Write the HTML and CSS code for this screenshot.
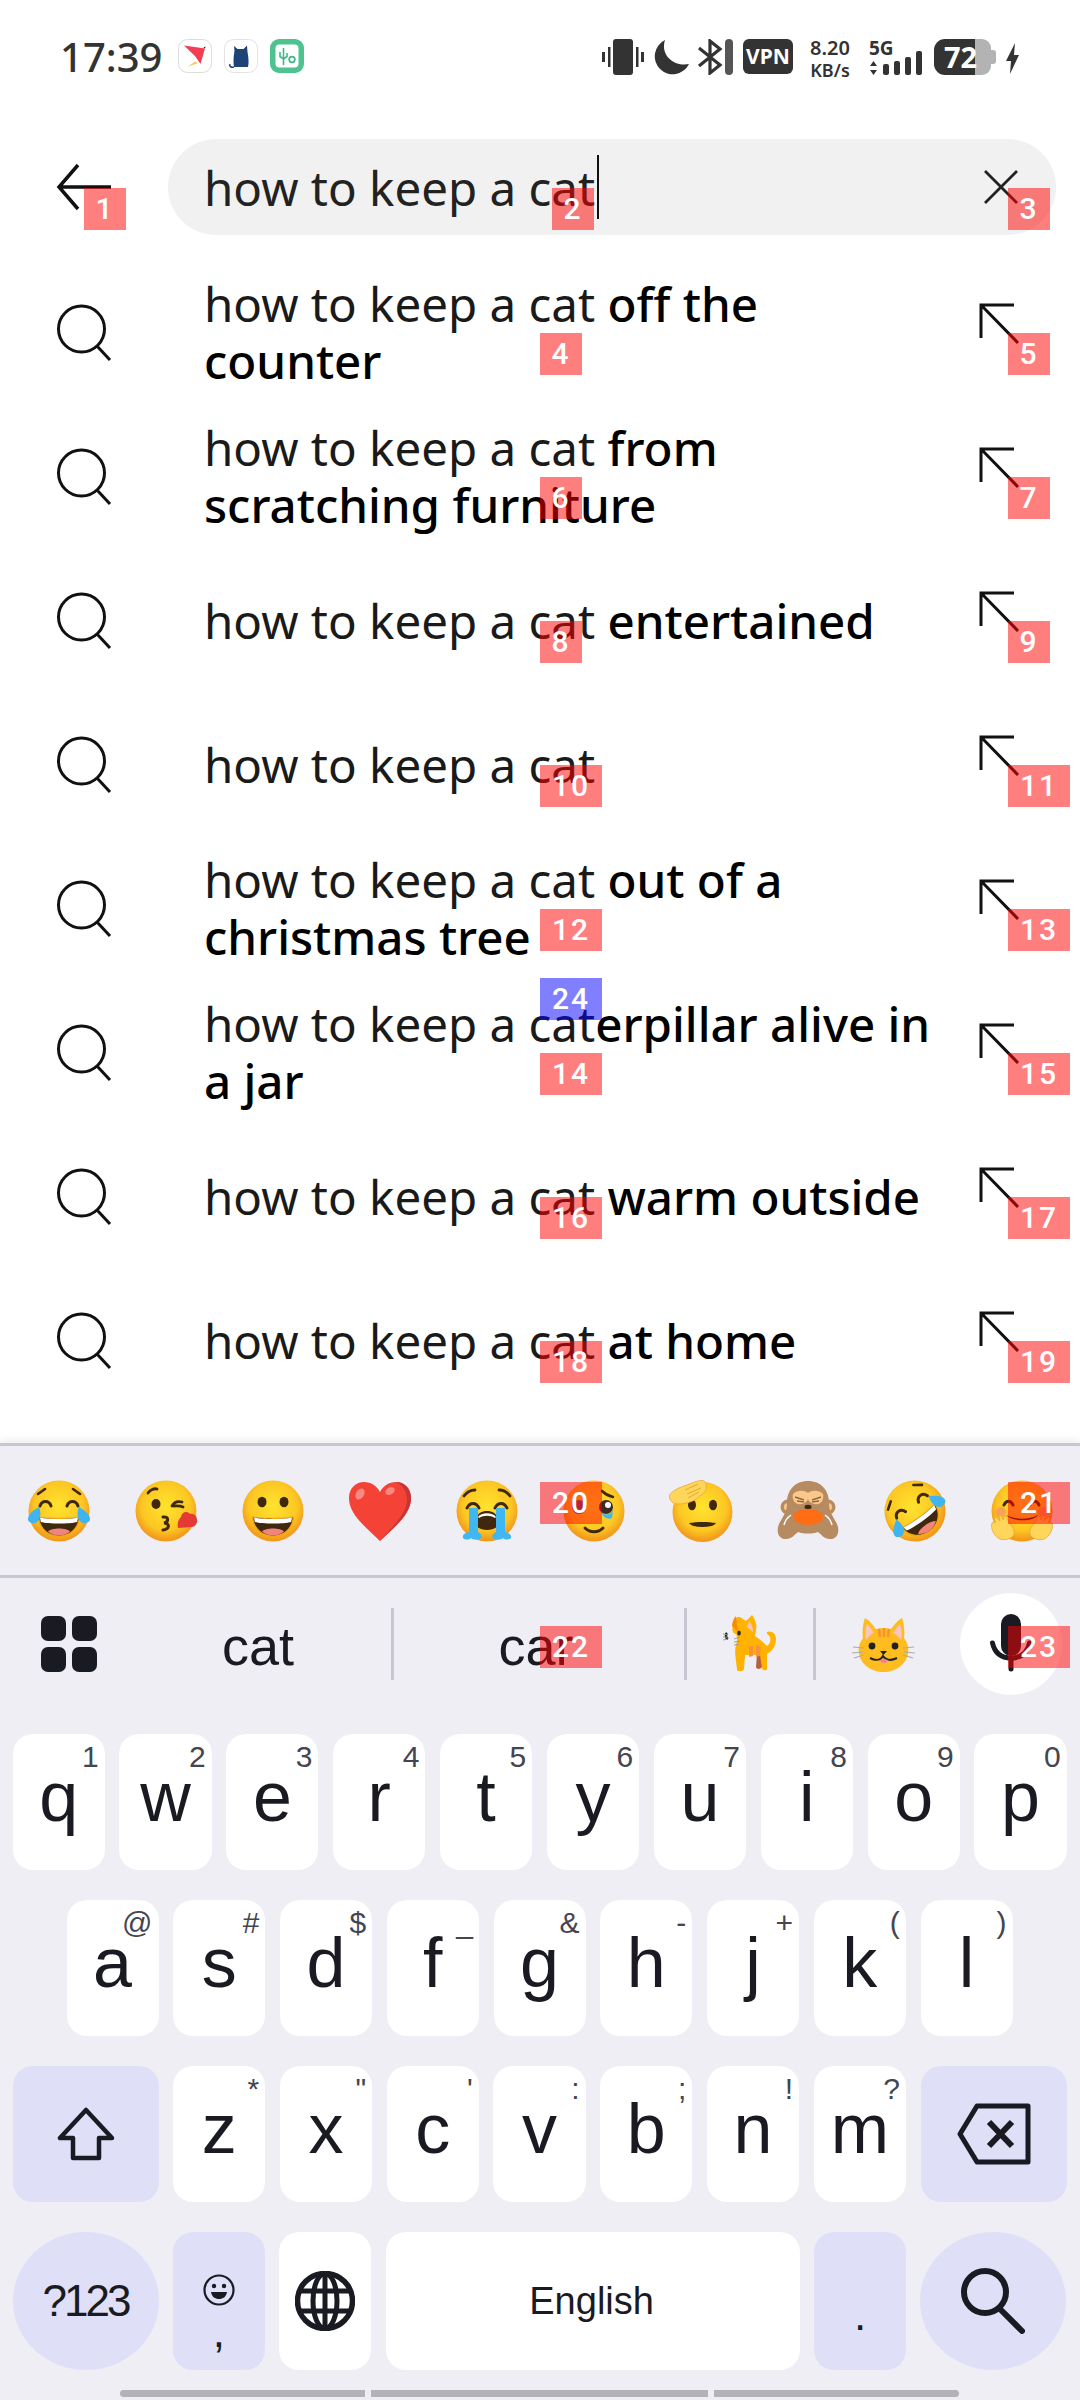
FILE: index.html
```html
<!DOCTYPE html>
<html lang="en">
<head>
<meta charset="utf-8">
<title>Search</title>
<link rel="stylesheet" href="styles.css">
</head>
<body>
<svg class="defs" aria-hidden="true">
  <defs>
    <radialGradient id="face" cx="50%" cy="42%" r="55%">
      <stop offset="0" stop-color="#ffe32e"/><stop offset=".72" stop-color="#fcc723"/><stop offset="1" stop-color="#f29a1c"/>
    </radialGradient>
    <symbol id="ball" viewBox="0 0 64 64"><circle cx="32" cy="32" r="30.5" fill="url(#face)"/></symbol>
    <symbol id="grin" viewBox="0 0 64 64">
      <path d="M11 37c7 2.500 35 2.500 42 0 1 10-8 21-21 21S10 47 11 37z" fill="#f5a50f"/>
      <path d="M12.500 38.500c8 2 31 2 39 0 0 9-8 18-19.500 18S12.500 47.500 12.500 38.500z" fill="#40280f"/>
      <path d="M13 38.500c8 2 30 2 38 0l-.8 4.500c-8 2-28.400 2-36.400 0z" fill="#fff"/>
      <path d="M21 52.500c3-4 19-4 22 0-3 2.500-7 4-11 4s-8-1.500-11-4z" fill="#f2857b"/>
    </symbol>
    <symbol id="joy" viewBox="0 0 64 64">
      <use href="#ball" width="64" height="64"/>
      <use href="#grin" width="64" height="64"/>
      <path d="M13 27c2-6 9-6 11 0M40 27c2-6 9-6 11 0" fill="none" stroke="#40280f" stroke-width="3" stroke-linecap="round"/>
      <path d="M11 15l7-5M53 15l-7-5" fill="none" stroke="#40280f" stroke-width="2.600" stroke-linecap="round"/>
      <path d="M12 28c-5 3-11 7-11 12 0 4 7 6 10 2 3-4 3-9 1-14zM52 28c5 3 11 7 11 12 0 4-7 6-10 2-3-4-3-9-1-14z" fill="#3fb4ef"/>
    </symbol>
  </defs>
</svg>

<div class="screen">
  <div class="status">
    <span class="time">17:39</span>
    <svg class="app" viewBox="0 0 34 34"><rect x=".5" y=".5" width="33" height="33" rx="9" fill="#fff" stroke="#dcdcdc"/><path d="M6 6.500L27 9.500 22.500 25 17 17z" fill="#f43c54"/><path d="M9.500 28L17 22.500 20 24z" fill="#fcc65a"/><path d="M25.500 8.500L27.500 7.500 27 9.500z" fill="#111"/></svg>
    <svg class="app" viewBox="0 0 34 34"><rect x=".5" y=".5" width="33" height="33" rx="9" fill="#fff" stroke="#e2e2e2"/><path d="M10 28c-1-7 0-13 .5-16L10 7l3.500 3h6L23 6.500 23.500 13c1 5 1.500 11 .5 15z" fill="#1d4377"/><path d="M10 28c-3 1-5-1-4-3" fill="none" stroke="#1d4377" stroke-width="1.500"/></svg>
    <svg class="app" viewBox="0 0 34 34"><rect width="34" height="34" rx="9" fill="#4ec38f"/><rect x="5.500" y="5.500" width="23" height="23" rx="4" fill="#fff"/><path d="M13.500 9v17M10 13v4.500l3.500 2.500 3.500-2.500V14" fill="none" stroke="#3fb98a" stroke-width="1.600"/><circle cx="22" cy="20.500" r="2.800" fill="none" stroke="#3fb98a" stroke-width="1.800"/></svg>

    <div class="status-right">
      <svg class="status-glyphs" viewBox="0 0 131 36">
        <rect x="11" width="20" height="36" rx="3" fill="#333"/>
        <rect y="13" width="3" height="10" fill="#333"/><rect x="6" y="8" width="2.500" height="20" fill="#333"/>
        <rect x="34" y="8" width="2.500" height="20" fill="#333"/><rect x="39" y="13" width="3" height="10" fill="#333"/>
        <path d="M63 1a18 18 0 1 0 24 24C72 28 58 16 63 1z" fill="#333"/>
        <path d="M97 9l21 17-10 8V2l10 8-21 17" fill="none" stroke="#333" stroke-width="3.200"/>
        <rect x="123" width="8" height="36" rx="4" fill="#555"/>
      </svg>
      <span class="vpn">VPN</span>
      <div class="speed"><span>8.20</span><span class="unit">KB/s</span></div>
      <div class="signal">
        <span class="fiveg">5G</span>
        <svg class="bars" viewBox="0 0 53 14"><path d="M4.500 0L8 5H1zM4.500 14L1 9h7z" fill="#333"/><rect x="14" y="3" width="6" height="11" rx="2" fill="#333"/><rect x="25" y="0" width="6" height="14" rx="2" fill="#333"/><rect x="36" y="-4" width="6" height="18" rx="2" fill="#333"/><rect x="47" y="-10" width="6" height="24" rx="2" fill="#333"/></svg>
      </div>
      <div class="battery">
        <svg class="battery-shape" viewBox="0 0 62 36"><path d="M57 11h2a3 3 0 0 1 3 3v8a3 3 0 0 1-3 3h-2z" fill="#b3b3b3"/><rect x="30" width="27" height="36" rx="9" fill="#b3b3b3"/><path d="M41 0H11A11 11 0 0 0 0 11v14a11 11 0 0 0 11 11h30z" fill="#333"/></svg>
        <span class="battery-level">72</span>
      </div>
      <svg class="bolt" viewBox="0 0 13 31"><path d="M9 0L0 18h5L4 31l9-19H8z" fill="#333"/></svg>
    </div>
  </div>

  <div class="header">
    <svg class="back" viewBox="0 0 56 48"><path d="M55 24H4M22 2L3 24l19 22" fill="none" stroke="#111" stroke-width="3.500"/></svg>
    <div class="search">
      <span class="query">how to keep a cat</span><span class="caret"></span>
      <svg class="clear" viewBox="0 0 36 36"><path d="M2 2l32 32M34 2L2 34" stroke="#222" stroke-width="2.800" fill="none"/></svg>
    </div>
    <span class="badge at-1">1</span><span class="badge at-2">2</span><span class="badge at-3">3</span>
  </div>

  <ul class="list">
    <li class="row">
      <svg class="ic-search" viewBox="0 0 64 64"><circle cx="25.500" cy="32" r="23" fill="none" stroke="#111" stroke-width="3"/><path d="M41 49l13 14" stroke="#111" stroke-width="3"/></svg>
      <p class="sug">how to keep a cat <b>off the<br>counter</b></p>
      <svg class="ic-fill" viewBox="0 0 44 44"><path d="M4 36V3h33M4 3l37 38" fill="none" stroke="#111" stroke-width="3"/></svg>
      <span class="badge mid">4</span><span class="badge end">5</span>
    </li>
    <li class="row">
      <svg class="ic-search" viewBox="0 0 64 64"><circle cx="25.500" cy="32" r="23" fill="none" stroke="#111" stroke-width="3"/><path d="M41 49l13 14" stroke="#111" stroke-width="3"/></svg>
      <p class="sug">how to keep a cat <b>from<br>scratching furniture</b></p>
      <svg class="ic-fill" viewBox="0 0 44 44"><path d="M4 36V3h33M4 3l37 38" fill="none" stroke="#111" stroke-width="3"/></svg>
      <span class="badge mid">6</span><span class="badge end">7</span>
    </li>
    <li class="row">
      <svg class="ic-search" viewBox="0 0 64 64"><circle cx="25.500" cy="32" r="23" fill="none" stroke="#111" stroke-width="3"/><path d="M41 49l13 14" stroke="#111" stroke-width="3"/></svg>
      <p class="sug">how to keep a cat <b>entertained</b></p>
      <svg class="ic-fill" viewBox="0 0 44 44"><path d="M4 36V3h33M4 3l37 38" fill="none" stroke="#111" stroke-width="3"/></svg>
      <span class="badge mid">8</span><span class="badge end">9</span>
    </li>
    <li class="row">
      <svg class="ic-search" viewBox="0 0 64 64"><circle cx="25.500" cy="32" r="23" fill="none" stroke="#111" stroke-width="3"/><path d="M41 49l13 14" stroke="#111" stroke-width="3"/></svg>
      <p class="sug">how to keep a cat</p>
      <svg class="ic-fill" viewBox="0 0 44 44"><path d="M4 36V3h33M4 3l37 38" fill="none" stroke="#111" stroke-width="3"/></svg>
      <span class="badge mid wide">10</span><span class="badge end wide">11</span>
    </li>
    <li class="row">
      <svg class="ic-search" viewBox="0 0 64 64"><circle cx="25.500" cy="32" r="23" fill="none" stroke="#111" stroke-width="3"/><path d="M41 49l13 14" stroke="#111" stroke-width="3"/></svg>
      <p class="sug">how to keep a cat <b>out of a<br>christmas tree</b></p>
      <svg class="ic-fill" viewBox="0 0 44 44"><path d="M4 36V3h33M4 3l37 38" fill="none" stroke="#111" stroke-width="3"/></svg>
      <span class="badge mid wide">12</span><span class="badge end wide">13</span>
    </li>
    <li class="row">
      <svg class="ic-search" viewBox="0 0 64 64"><circle cx="25.500" cy="32" r="23" fill="none" stroke="#111" stroke-width="3"/><path d="M41 49l13 14" stroke="#111" stroke-width="3"/></svg>
      <p class="sug">how to keep a cat<b>erpillar alive in<br>a jar</b></p>
      <svg class="ic-fill" viewBox="0 0 44 44"><path d="M4 36V3h33M4 3l37 38" fill="none" stroke="#111" stroke-width="3"/></svg>
      <span class="badge mid wide blue">24</span><span class="badge mid wide">14</span><span class="badge end wide">15</span>
    </li>
    <li class="row">
      <svg class="ic-search" viewBox="0 0 64 64"><circle cx="25.500" cy="32" r="23" fill="none" stroke="#111" stroke-width="3"/><path d="M41 49l13 14" stroke="#111" stroke-width="3"/></svg>
      <p class="sug">how to keep a cat <b>warm outside</b></p>
      <svg class="ic-fill" viewBox="0 0 44 44"><path d="M4 36V3h33M4 3l37 38" fill="none" stroke="#111" stroke-width="3"/></svg>
      <span class="badge mid wide">16</span><span class="badge end wide">17</span>
    </li>
    <li class="row">
      <svg class="ic-search" viewBox="0 0 64 64"><circle cx="25.500" cy="32" r="23" fill="none" stroke="#111" stroke-width="3"/><path d="M41 49l13 14" stroke="#111" stroke-width="3"/></svg>
      <p class="sug">how to keep a cat <b>at home</b></p>
      <svg class="ic-fill" viewBox="0 0 44 44"><path d="M4 36V3h33M4 3l37 38" fill="none" stroke="#111" stroke-width="3"/></svg>
      <span class="badge mid wide">18</span><span class="badge end wide">19</span>
    </li>
  </ul>

  <div class="keyboard">
    <div class="emoji-row">
      <svg class="emoji" viewBox="0 0 64 64"><use href="#joy" width="64" height="64"/></svg>
      <svg class="emoji" viewBox="0 0 64 64"><use href="#ball" width="64" height="64"/><ellipse cx="22" cy="25" rx="4.500" ry="5" fill="#40280f"/><path d="M14 14c2-3 6-5 9-4M38 27c2-4 6-5 10-4M40 27c3 0 6-.5 9 1" fill="none" stroke="#40280f" stroke-width="2.800" stroke-linecap="round"/><path d="M29 38c6-1 6 5 1 6 6 0 6 6-1 7" fill="none" stroke="#40280f" stroke-width="3" stroke-linecap="round"/><path d="M47 38c1-6 7-6 9-3 4-1 8 3 7 8-1 3-2 5-6 5l-13 1c-1-4 0-8 3-11z" fill="#e53935"/></svg>
      <svg class="emoji" viewBox="0 0 64 64"><use href="#ball" width="64" height="64"/><use href="#grin" width="64" height="64"/><ellipse cx="21" cy="23" rx="4.500" ry="5.200" fill="#40280f"/><ellipse cx="43" cy="23" rx="4.500" ry="5.200" fill="#40280f"/></svg>
      <svg class="emoji" viewBox="0 0 64 64"><path d="M32 62C18 48 1 36 1 19 1 9 8 3 16 3c7 0 13 4 16 10C35 7 41 3 48 3c8 0 15 6 15 16 0 17-17 29-31 43z" fill="#f44336"/><path d="M48 3c8 0 15 6 15 16 0 17-17 29-31 43 11-13 27-27 27-42 0-8-5-14-11-17z" fill="#c93535"/><ellipse cx="12" cy="15" rx="4" ry="6" transform="rotate(30 12 15)" fill="#f98a80"/><ellipse cx="42" cy="12" rx="5" ry="3.500" transform="rotate(-30 42 12)" fill="#f98a80"/></svg>
      <svg class="emoji" viewBox="0 0 64 64"><use href="#ball" width="64" height="64"/><path d="M9 17c3-4 7-6 11-6M55 17c-3-4-7-6-11-6M12 29c3-6 9-6 12 0M40 29c3-6 9-6 12 0" fill="none" stroke="#40280f" stroke-width="2.800" stroke-linecap="round"/><path d="M22 48V40c0-6 5-8 10-8s10 2 10 8v8c-6 4-14 4-20 0z" fill="#40280f"/><path d="M23 38c3-5 15-5 18 0l-1 1c-5-3-11-3-16 0z" fill="#fff"/><path d="M14 29h9v24c3 2 5 4 3 6-2 2-8 2-10 0-2 2-6 2-8 0-1-3 2-5 6-6zM41 29h9v24c4 1 7 3 6 6-2 2-6 2-8 0-2 2-8 2-10 0-2-2 0-4 3-6z" fill="#3fb7f2"/></svg>
      <svg class="emoji" viewBox="0 0 64 64"><use href="#ball" width="64" height="64"/><ellipse cx="17" cy="28" rx="7" ry="7" fill="#6d4a6e"/><ellipse cx="44" cy="28" rx="7" ry="7" fill="#3f2a2a"/><circle cx="46" cy="26" r="3" fill="#fff"/><path d="M38 31c3 6 10 6 13 0l-1 8c-4 2-9 0-12-8z" fill="#3fb7f2"/><path d="M23 49c5 5 13 5 18 0" fill="none" stroke="#40280f" stroke-width="3" stroke-linecap="round"/><path d="M40 12c3 3 7 5 11 6" fill="none" stroke="#40280f" stroke-width="2.600" stroke-linecap="round"/></svg>
      <svg class="emoji" viewBox="0 0 64 64"><circle cx="33.500" cy="33" r="30" fill="url(#face)"/><ellipse cx="23" cy="26" rx="4" ry="5.200" fill="#40280f"/><ellipse cx="44" cy="26" rx="4" ry="5.200" fill="#40280f"/><path d="M20 44c8-1.500 19-1.500 27 0-2 3-7 4-13 4s-12-1-14-4z" fill="#40280f"/><path d="M0 17c3-6 12-9 18-11 5-2 14-6 17-4 2 1 3 4 2 6 1 3-3 7-6 9-6 6-15 8-22 8-5 0-8-3-9-8z" fill="#ffd65c" stroke="#eda52b" stroke-width=".8"/><path d="M16 11l13-6M18 15l14-6M19 19l11-6" fill="none" stroke="#eda52b" stroke-width="1"/></svg>
      <svg class="emoji" viewBox="0 0 64 64"><circle cx="12" cy="28" r="7.500" fill="#b78b62"/><circle cx="52" cy="28" r="7.500" fill="#b78b62"/><circle cx="12" cy="28" r="4" fill="#fcc889"/><circle cx="52" cy="28" r="4" fill="#fcc889"/><path d="M32 2C19 2 11 11 11 24c0 8-3 12-8 21-3 7-1 15 7 15 6 0 8-4 12-7 6 2 14 2 20 0 4 3 6 7 12 7 8 0 10-8 7-15-5-9-8-13-8-21C53 11 45 2 32 2z" fill="#b78b62"/><path d="M32 14c-4-3-11-3-15 1-1 5 1 9 5 10 5 1 9-2 10-5 1 3 5 6 10 5 4-1 6-5 5-10-4-4-11-4-15-1z" fill="#fcc889"/><path d="M19 18l9 3M21 22l7 1M45 18l-9 3M43 22l-7 1" stroke="#8d6a48" stroke-width="1.500"/><ellipse cx="32" cy="28" rx="3.500" ry="2.200" fill="#40280f"/><ellipse cx="32" cy="38" rx="15" ry="8" fill="#ff6d14"/><path d="M15 36c-3 2-6 6-7 10M49 36c3 2 6 6 7 10" fill="none" stroke="#fff" stroke-width="1.500"/></svg>
      <svg class="emoji" viewBox="0 0 64 64"><g transform="rotate(-36 32 32)"><use href="#joy" width="64" height="64"/></g></svg>
      <svg class="emoji" viewBox="0 0 64 64"><use href="#ball" width="64" height="64"/><path d="M14 26c2-5 7-5 9 0M40 26c2-5 7-5 9 0" fill="none" stroke="#40280f" stroke-width="3" stroke-linecap="round"/><path d="M16 36c10 5 22 5 32 0-4 7-26 7-32 0z" fill="#40280f"/><circle cx="11" cy="33" r="5" fill="#f5867a" opacity=".6"/><circle cx="53" cy="33" r="5" fill="#f5867a" opacity=".6"/><path d="M2 44c-2 6 3 14 8 16 6 2 13-1 14-5 1-6-3-8-5-12-2-3-2-6-4-6-2 0-1 4-2 4-1-4-3-6-4-4l1 5-4-4c-2 0-2 3 0 5z" fill="#ffd65c" stroke="#eda52b" stroke-width=".8"/><path d="M62 44c2 6-3 14-8 16-6 2-13-1-14-5-1-6 3-8 5-12 2-3 2-6 4-6 2 0 1 4 2 4 1-4 3-6 4-4l-1 5 4-4c2 0 2 3 0 5z" fill="#ffd65c" stroke="#eda52b" stroke-width=".8"/></svg>
      <span class="badge emoji-badge mid wide">20</span><span class="badge emoji-badge end wide">21</span>
    </div>

    <div class="suggest-row">
      <div class="apps"><span></span><span></span><span></span><span></span></div>
      <span class="word cell-a">cat</span>
      <i class="divider"></i>
      <span class="word cell-b">car</span>
      <i class="divider"></i>
      <div class="cell-c">
        <svg class="cat-walk" viewBox="0 0 54 60"><path d="M14 54l2-14h6l-3 14c-2 3-5 2-5 0zM33 52l1-13h6l-1 13c-2 3-6 2-6 0z" fill="#b85f3f"/><path d="M14 2l3 0 6 4 6-6c4 5 5 11 4 15l-1 6c5 3 9 7 12 10 3-2 4-5 3-9-1-2-4-3-3-5 4-2 9 1 9 7 0 8-5 13-9 15v14c1 3-5 3-5 0l-2-13H22l-1 14c-1 3-7 3-7 0-1-9-3-18-1-24 1-4 2-7 0-11C8 18 8 12 14 2z" fill="#ffb300"/><path d="M13 1l2 16-6-6c0-4 2-8 4-10z" fill="#fb8c00"/><path d="M26 6c3 3 4 7 4 11l-6-5z" fill="#fbc5b8"/><path d="M33 30l5 2-1 9-4 1zM26 31l4 0 0 10-4 1z" fill="#f9913a"/><ellipse cx="16" cy="18" rx="1.800" ry="2.500" fill="#2a2a2a"/><path d="M4 18c-2 2-1 5 1 6" stroke="#222" stroke-width="2.500" fill="none"/><path d="M0 19l5 1M0 22l5 0M0 25l5-1M11 24l6-2M11 27l6-1M11 30l5-1" stroke="#999" stroke-width=".9"/></svg>
      </div>
      <i class="divider"></i>
      <div class="cell-d">
        <svg class="cat-face" viewBox="0 0 63 56"><path d="M13 1c4 2 8 7 11 11 5-1.500 10-1.500 15 0 3-4 7-9 11-11 2 5 3 14 2 20 4 5 5 11 4 15-1 11-12 19-24.500 19S8 47 7 36c-1-4 0-10 4-15-1-6 0-15 2-20z" fill="#ffbc1f"/><path d="M15 7c3 3 5 6 7 9-3 1-6 4-8 7-1-5-1-11 1-16zM48 7c-3 3-5 6-7 9 3 1 6 4 8 7 1-5 1-11-1-16z" fill="#fbc5c2"/><path d="M27 12l1 8M32 11v9M37 12l-1 8" stroke="#f59331" stroke-width="2.500"/><circle cx="20" cy="29" r="3.400" fill="#222"/><circle cx="43" cy="29" r="3.400" fill="#222"/><path d="M28 34h7l-3.500 4z" fill="#222"/><path d="M18 41c6 3 11 2 13-2 3 4 8 5 14 2" fill="none" stroke="#222" stroke-width="2"/><path d="M28 43c1 4 7 4 8 0-3-1-5-1-8 0z" fill="#ef7f9a"/><path d="M1 30l11 1M0 36l11-1M2 41l10-3M62 30l-11 1M63 36l-11-1M61 41l-10-3" stroke="#aaa" stroke-width="1.200"/></svg>
      </div>
      <div class="mic">
        <svg class="mic-icon" viewBox="0 0 42 58"><rect x="11" width="20" height="42" rx="10" fill="#1a1b22"/><path d="M2.500 29C5 40 12 44 21 44s16-4 18.500-15" fill="none" stroke="#1a1b22" stroke-width="5" stroke-linecap="round"/><path d="M21 44v11" stroke="#1a1b22" stroke-width="5" stroke-linecap="round"/></svg>
      </div>
      <span class="badge suggest-badge mid wide">22</span><span class="badge suggest-badge end wide">23</span>
    </div>

    <div class="keys">
      <div class="key-row">
        <div class="key">q<sup class="hint">1</sup></div><div class="key">w<sup class="hint">2</sup></div><div class="key">e<sup class="hint">3</sup></div><div class="key">r<sup class="hint">4</sup></div><div class="key">t<sup class="hint">5</sup></div><div class="key">y<sup class="hint">6</sup></div><div class="key">u<sup class="hint">7</sup></div><div class="key">i<sup class="hint">8</sup></div><div class="key">o<sup class="hint">9</sup></div><div class="key">p<sup class="hint">0</sup></div>
      </div>
      <div class="key-row inset">
        <div class="key">a<sup class="hint">@</sup></div><div class="key">s<sup class="hint">#</sup></div><div class="key">d<sup class="hint">$</sup></div><div class="key">f<sup class="hint">_</sup></div><div class="key">g<sup class="hint">&amp;</sup></div><div class="key">h<sup class="hint">-</sup></div><div class="key">j<sup class="hint">+</sup></div><div class="key">k<sup class="hint">(</sup></div><div class="key">l<sup class="hint">)</sup></div>
      </div>
      <div class="key-row">
        <div class="key wide-key tint icon-key"><svg class="k-shift" viewBox="0 0 58 54"><path d="M29 3L3 31h13v20h26V31h13z" fill="none" stroke="#1a1b22" stroke-width="4.500" stroke-linejoin="round"/></svg></div>
        <div class="key">z<sup class="hint">*</sup></div><div class="key">x<sup class="hint">"</sup></div><div class="key">c<sup class="hint">'</sup></div><div class="key">v<sup class="hint">:</sup></div><div class="key">b<sup class="hint">;</sup></div><div class="key">n<sup class="hint">!</sup></div><div class="key">m<sup class="hint">?</sup></div>
        <div class="key wide-key tint icon-key"><svg class="k-back" viewBox="0 0 74 62"><path d="M20 3h51v56H20L3 31z" fill="none" stroke="#1a1b22" stroke-width="5" stroke-linejoin="round"/><path d="M32 19l23 24M55 19L32 43" stroke="#1a1b22" stroke-width="6"/></svg></div>
      </div>
      <div class="key-row tall">
        <div class="key wide-key tint round small-text">?123</div>
        <div class="key tint stack">
          <svg class="k-smile" viewBox="0 0 32 32"><circle cx="16" cy="16" r="14.500" fill="none" stroke="#1a1b22" stroke-width="2.200"/><circle cx="11" cy="12" r="2.200" fill="#1a1b22"/><circle cx="21" cy="12" r="2.200" fill="#1a1b22"/><path d="M8 18h16c-1 5-4 7-8 7s-7-2-8-7z" fill="#1a1b22"/></svg>
          <span class="punct">,</span>
        </div>
        <div class="key icon-key"><svg class="k-globe" viewBox="0 0 60 60"><circle cx="30" cy="30" r="27.500" fill="none" stroke="#1a1b22" stroke-width="5.500"/><ellipse cx="30" cy="30" rx="12" ry="27.500" fill="none" stroke="#1a1b22" stroke-width="5"/><path d="M30 3v54M4 20h52M4 40h52" stroke="#1a1b22" stroke-width="5"/></svg></div>
        <div class="key space">English</div>
        <div class="key tint dot"><span class="punct">.</span></div>
        <div class="key wide-key tint round icon-key"><svg class="k-search" viewBox="0 0 64 66"><circle cx="24" cy="24" r="21" fill="none" stroke="#1a1b22" stroke-width="6"/><path d="M39 41l22 22" stroke="#1a1b22" stroke-width="6" stroke-linecap="round"/></svg></div>
      </div>
    </div>

    <div class="gesture"><span></span><span></span><span></span></div>
  </div>
</div>
</body>
</html>
```

FILE: styles.css
```css
* { box-sizing: border-box; }
html, body { margin: 0; padding: 0; background: #fff; }
.defs { position: absolute; width: 0; height: 0; }

.screen {
  width: 1080px;
  height: 2400px;
  overflow: hidden;
  display: flex;
  flex-direction: column;
  font-family: "Noto Sans", sans-serif;
  color: #111;
}

/* status bar */
.status {
  display: flex;
  align-items: flex-start;
  height: 139px;
  padding: 39px 61px 0 60px;
  color: #333;
}
.time { font-size: 40px; line-height: 36px; font-weight: 500; width: 118px; }
.app { width: 34px; height: 34px; margin-right: 12px; }
.status-right { display: flex; align-items: flex-start; margin-left: auto; }
.status-glyphs { width: 131px; height: 36px; margin-right: 10px; }
.vpn {
  width: 50px; height: 35px;
  background: #333; color: #fff;
  border-radius: 6px;
  font-size: 21px; font-weight: 700; line-height: 35px; text-align: center;
  margin-right: 14px;
}
.speed {
  width: 46px; margin-right: 16px;
  display: flex; flex-direction: column; align-items: center;
  font-size: 20px; font-weight: 600; line-height: 18px;
}
.speed .unit { font-size: 18px; margin-top: 4px; }
.signal { width: 53px; margin-right: 12px; display: flex; flex-direction: column; }
.fiveg { font-size: 19px; font-weight: 700; line-height: 18px; }
.bars { width: 53px; height: 14px; margin-top: 4px; overflow: visible; }
.battery { position: relative; width: 62px; height: 36px; margin-right: 10px; }
.battery-shape { width: 62px; height: 36px; display: block; }
.battery-level {
  position: absolute; left: 10px; top: 0;
  color: #fff; font-size: 29px; font-weight: 700; line-height: 36px;
}
.bolt { width: 13px; height: 31px; margin-top: 4px; }

/* search header */
.header {
  position: relative;
  display: flex;
  align-items: center;
  height: 118px;
  padding: 0 24px 22px 56px;
}
.back { width: 56px; height: 48px; margin-right: 56px; }
.search {
  flex: 1;
  height: 96px;
  border-radius: 48px;
  background: #f1f1f1;
  display: flex;
  align-items: center;
  padding-left: 36px;
  font-size: 47.500px;
  line-height: 57px;
  color: #222;
}
.caret { width: 2px; height: 64px; background: #111; margin-left: 2px; }
.clear { width: 36px; height: 36px; margin-left: auto; margin-right: 37px; }

/* badges */
.badge {
  position: absolute;
  display: flex;
  align-items: center;
  justify-content: center;
  top: 76px;
  width: 42px;
  height: 42px;
  background: rgba(255, 0, 0, .5);
  color: #fff;
  font-family: "Roboto", sans-serif;
  font-weight: 500;
  font-size: 30px;
  letter-spacing: 2px;
  padding-bottom: 2px;
}
.badge.wide { width: 62px; }
.badge.mid { left: 540px; }
.badge.end { left: 1008px; }
.badge.at-1 { left: 84px; top: 49px; }
.badge.at-2 { left: 552px; top: 49px; }
.badge.at-3 { left: 1008px; top: 49px; }
.badge.blue { top: 1px; background: rgba(0, 0, 255, .5); }
.badge.emoji-badge { top: 36px; }
.badge.suggest-badge { top: 48px; }

/* suggestion list */
.list { list-style: none; margin: 0; padding: 0; }
.row {
  position: relative;
  display: flex;
  align-items: center;
  height: 144px;
  padding: 0 59px 0 56px;
}
.ic-search { width: 64px; height: 64px; margin-right: 84px; flex: none; }
.sug {
  margin: 0;
  padding-top: 6px;
  font-size: 47.500px;
  line-height: 57px;
  white-space: nowrap;
  color: #1a1a1a;
}
.sug b { font-weight: 480; color: #000; }
.ic-fill { width: 44px; height: 44px; margin-left: auto; margin-top: -10px; flex: none; }

/* keyboard */
.keyboard {
  margin-top: auto;
  height: 957px;
  background: #eeeef4;
  border-top: 3px solid #c8c6d0;
  box-shadow: 0 -4px 6px rgba(200, 198, 208, .25);
  display: flex;
  flex-direction: column;
  color: #1a1b22;
  font-family: "Liberation Sans", Arial, sans-serif;
}
.emoji-row {
  position: relative;
  display: flex;
  align-items: center;
  height: 132px;
  padding-left: 27px;
  gap: 43px;
  border-bottom: 3px solid #c8c6d0;
}
.emoji { width: 64px; height: 64px; flex: none; }

.suggest-row {
  position: relative;
  display: flex;
  align-items: flex-start;
  height: 156px;
}
.apps {
  display: grid;
  grid-template-columns: 25px 25px;
  gap: 6px;
  width: 56px;
  margin: 38px 31px 0 41px;
}
.apps span { height: 25px; border-radius: 7px; background: #1a1b22; }
.word {
  font-size: 54px;
  line-height: 60px;
  text-align: center;
  padding-top: 38px;
}
.cell-a { width: 263px; padding-right: 3px; }
.cell-b { width: 290px; padding-right: 6px; }
.divider { width: 3px; height: 72px; margin-top: 30px; background: #c8c6d0; flex: none; }
.cell-c { width: 126px; display: flex; justify-content: center; padding-top: 37px; }
.cell-d { width: 134px; display: flex; justify-content: center; padding-top: 39px; }
.cat-walk { width: 54px; height: 60px; }
.cat-face { width: 63px; height: 56px; }
.mic {
  width: 102px; height: 102px;
  margin: 15px 0 0 10px;
  border-radius: 50%;
  background: #fff;
  display: flex;
  justify-content: center;
  padding-top: 21px;
}
.mic-icon { width: 42px; height: 58px; }

.keys { display: flex; flex-direction: column; gap: 30px; }
.key-row { display: flex; gap: 14.700px; height: 136px; padding: 0 13.500px 0 12.500px; }
.key-row.inset { padding: 0 67.500px 0 66.500px; }
.key-row.tall { height: 138px; }
.key {
  position: relative;
  flex: 1;
  display: flex;
  justify-content: center;
  padding-top: 28px;
  background: #fff;
  border-radius: 20px;
  font-size: 70px;
  line-height: 70px;
}
.wide-key { flex: 0 0 146px; }
.tint { background: #dfe0f8; }
.round { border-radius: 50%; }
.icon-key { align-items: center; padding-top: 0; }
.hint {
  position: absolute;
  right: 6px;
  top: 2px;
  font-size: 30px;
  line-height: 42px;
  color: #44454f;
  vertical-align: baseline;
}
.small-text { align-items: center; padding-top: 0; font-size: 44px; letter-spacing: -3px; }
.stack { flex-direction: column; align-items: center; padding-top: 25px; }
.k-smile { width: 32px; height: 32px; flex: none; }
.punct { font-size: 44px; line-height: 44px; }
.stack .punct { margin-top: 4px; }
.dot { padding-top: 61px; }
.space { flex: 0 0 414px; align-items: center; padding-top: 0; font-size: 38px; padding-right: 2px; }
.k-shift { width: 58px; height: 54px; }
.k-back { width: 74px; height: 62px; }
.k-globe { width: 60px; height: 60px; }
.k-search { width: 64px; height: 66px; }

.gesture { display: flex; gap: 6px; margin: 20px 120px 0; height: 7px; }
.gesture span { height: 7px; background: #b3b2b8; }
.gesture span:nth-child(1) { width: 245px; border-radius: 4px 0 0 4px; }
.gesture span:nth-child(2) { width: 337px; }
.gesture span:nth-child(3) { width: 245px; border-radius: 0 4px 4px 0; }
```
